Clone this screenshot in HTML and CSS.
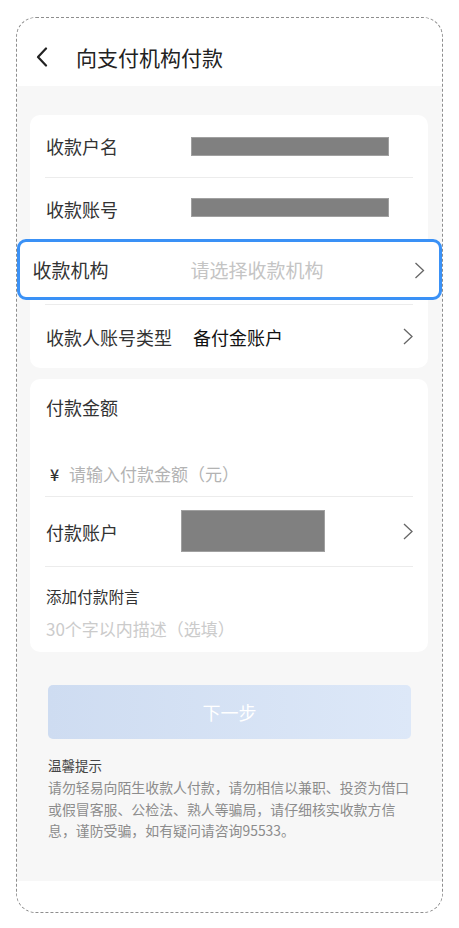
FILE: index.html
```html
<!DOCTYPE html>
<html lang="zh-CN">
<head>
<meta charset="utf-8">
<title>向支付机构付款</title>
<link rel="stylesheet" href="styles.css">
</head>
<body>
<div class="frame">
  <header class="header">
    <svg class="back" width="12" height="20" viewBox="0 0 12 20"><path d="M10 1.5 L2 10 L10 18.5" fill="none" stroke="#222" stroke-width="2.2" stroke-linecap="round" stroke-linejoin="round"/></svg>
    <h1 class="title">向支付机构付款</h1>
  </header>
  <main class="main">
    <section class="card card-payee">
      <div class="row r1">
        <span class="label">收款户名</span>
        <span class="mask mask-name"></span>
      </div>
      <div class="divider"></div>
      <div class="row r2">
        <span class="label">收款账号</span>
        <span class="mask mask-name"></span>
      </div>
      <div class="divider"></div>
      <div class="row-hl">
        <div class="highlight">
          <span class="hl-label">收款机构</span>
          <span class="hl-placeholder">请选择收款机构</span>
          <svg class="chev chev-hl" width="11" height="17" viewBox="0 0 11 17"><path d="M1.5 1 L9.5 8.5 L1.5 16" fill="none" stroke="#666" stroke-width="1.3"/></svg>
        </div>
      </div>
      <div class="divider"></div>
      <div class="row r4">
        <span class="label">收款人账号类型</span>
        <span class="value">备付金账户</span>
        <svg class="chev" width="10" height="17" viewBox="0 0 10 17"><path d="M1 1 L9 8.5 L1 16" fill="none" stroke="#666" stroke-width="1.3"/></svg>
      </div>
    </section>

    <section class="card card-pay">
      <div class="amount">
        <div class="amount-title">付款金额</div>
        <div class="amount-input"><span class="yen">¥</span><span class="amount-ph">请输入付款金额（元）</span></div>
      </div>
      <div class="divider"></div>
      <div class="row account">
        <span class="label label-acc">付款账户</span>
        <span class="mask mask-acc"></span>
        <svg class="chev" width="10" height="17" viewBox="0 0 10 17"><path d="M1 1 L9 8.5 L1 16" fill="none" stroke="#666" stroke-width="1.3"/></svg>
      </div>
      <div class="divider"></div>
      <div class="memo">
        <div class="memo-title">添加付款附言</div>
        <div class="memo-ph">30个字以内描述（选填）</div>
      </div>
    </section>

    <button class="next" type="button">下一步</button>

    <section class="tips">
      <div class="tips-title">温馨提示</div>
      <p class="tips-text">
        <span class="line">请勿轻易向陌生收款人付款，请勿相信以兼职、投资为借口</span>
        <span class="line">或假冒客服、公检法、熟人等骗局，请仔细核实收款方信</span>
        <span class="line">息，谨防受骗，如有疑问请咨询95533。</span>
      </p>
    </section>
  </main>
  <footer class="footer"></footer>
</div>
</body>
</html>
```
FILE: styles.css
```css
* { box-sizing: border-box; }
html, body { margin: 0; padding: 0; background: #fff; }
body {
  font-family: "Noto Sans CJK SC", "Noto Sans", "Liberation Sans", sans-serif;
  color: #333;
}
.frame {
  margin: 17px 16px 0 16px;
  height: 896px;
  border: 1px dashed #8e8e8e;
  border-radius: 20px;
  overflow: hidden;
  background: #fff;
  display: flex;
  flex-direction: column;
}
.header {
  height: 68px;
  flex: none;
  display: flex;
  align-items: center;
  padding: 0 0 0 19px;
}
.back { margin-top: 9px; margin-right: 28px; }
.title {
  margin: 9px 0 0 0;
  font-size: 21px;
  font-weight: 400;
  color: #222;
  line-height: 28px;
}
.main {
  height: 795px;
  flex: none;
  background: #f7f7f7;
  padding-top: 29px;
  display: flex;
  flex-direction: column;
}
.footer { flex: 1; background: #fff; }

.card {
  background: #fff;
  border-radius: 10px;
  margin: 0 14px 0 13px;
}
.divider {
  height: 1px;
  background: #ececec;
  margin: 0 15px;
}
.row {
  display: flex;
  align-items: center;
  padding: 0 15px 0 16px;
}
.r1 { height: 62px; }
.r2 { height: 61px; }
.r4 { height: 63px; }
.label {
  width: 145px;
  flex: none;
  font-size: 18px;
  color: #333;
  line-height: 26px;
}
.value {
  flex: 1;
  font-size: 18px;
  color: #111;
  font-weight: 400;
  padding-left: 2px;
}
.chev { flex: none; margin-left: auto; }
.mask {
  display: block;
  background: #808080;
  box-shadow: inset 0 0 0 1px #a0a0a0;
}
.mask-name { width: 198px; height: 19px; }
.r1 .mask-name { margin-top: 1px; }
.r2 .mask-name { margin-top: -2px; }

.row-hl { height: 65px; }
.highlight {
  margin: -1px -14px 0 -13px;
  height: 61px;
  border: 3.5px solid #3a91f6;
  border-radius: 9px;
  background: #fff;
  display: flex;
  align-items: center;
  padding: 0 14px 0 12.5px;
}
.hl-label {
  width: 158px;
  flex: none;
  font-size: 19px;
  color: #333;
}
.hl-placeholder {
  font-size: 19px;
  color: #c4c4c4;
}
.chev-hl { margin-left: auto; margin-top: 2px; }

.card-pay { margin-top: 11px; }
.amount { padding: 14px 16px 8px 16px; }
.amount-title { font-size: 18px; line-height: 28px; color: #333; }
.amount-input {
  margin-top: 39px;
  line-height: 28px;
  display: flex;
  align-items: center;
}
.yen { font-size: 16px; color: #333; margin-left: 4px; width: 19px; font-weight: 500; }
.amount-ph { font-size: 17px; color: #b3b3b3; }
.account { height: 69px; }
.label-acc { width: 135px; }
.mask-acc { width: 144px; height: 42px; margin-top: -1px; }
.memo { padding: 17px 16px 10px 16px; }
.memo-title { font-size: 15.6px; line-height: 24px; color: #333; }
.memo-ph { margin-top: 8px; font-size: 17px; line-height: 26px; color: #cbcbcb; }

.next {
  margin: 33px 31px 0 31px;
  height: 54px;
  border: none;
  border-radius: 5px;
  background: linear-gradient(90deg, #cedcf1 0%, #dde8f8 100%);
  color: #fff;
  font-family: inherit;
  font-size: 18px;
  padding: 0;
}
.tips { margin: 16px 31px 0 31px; }
.tips-title { font-size: 13.5px; line-height: 20px; color: #444; }
.tips-text {
  margin: 2px 0 0 0;
  font-size: 13.9px;
  line-height: 21.5px;
  color: #8c8c8c;
}
.line { display: block; white-space: nowrap; }
```
